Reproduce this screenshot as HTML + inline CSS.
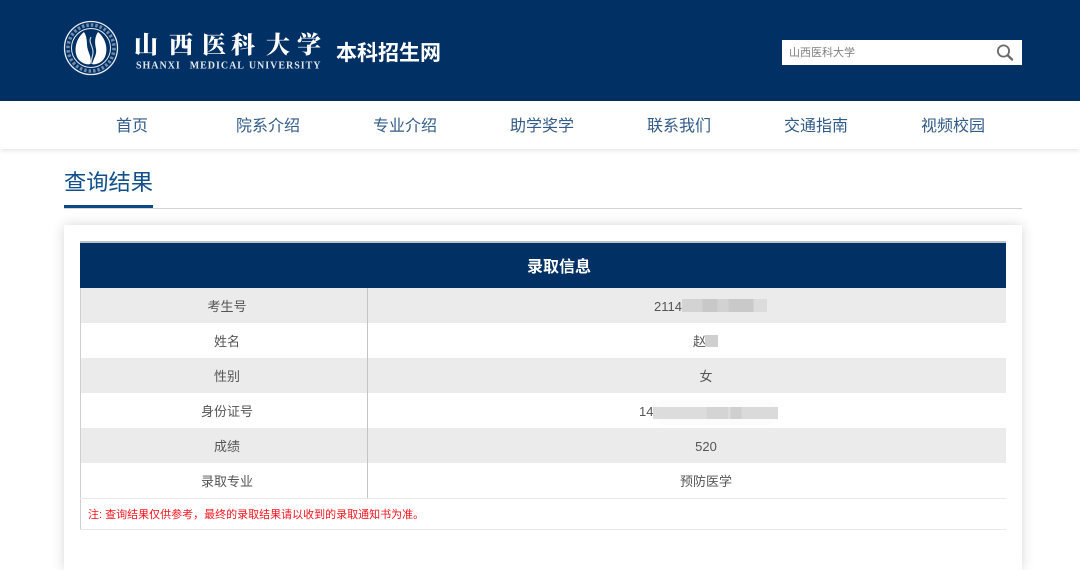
<!DOCTYPE html>
<html lang="zh"><head><meta charset="utf-8"><style>
html{margin:0;padding:0;background:#fff;height:570px;overflow:hidden}
body{margin:0;padding:0;background:#fff;width:1080px;height:570px;overflow:hidden;position:relative;font-family:"Liberation Sans","Noto Sans CJK SC",sans-serif}
.a{position:absolute;white-space:nowrap}
.hd{left:0;top:0;width:1080px;height:101px;background:#003064}
.nav{left:0;top:101px;width:1080px;height:48px;background:#fff;box-shadow:0 1px 5px rgba(0,0,0,.13)}
.n{top:116px;width:136px;text-align:center;font-size:16px;line-height:22px;color:#315b88}
.cn{top:28px;font-family:"Noto Serif CJK SC",serif;font-weight:900;font-size:24px;line-height:30px;color:#fff}
.card{left:64px;top:225px;width:958px;height:345px;background:#fff;box-shadow:0 0 12px rgba(0,0,0,.16)}
.row{left:80px;width:926px;height:35px}
.g{background:#ebebeb}
.l,.v{top:1px;text-align:center;font-size:13px;line-height:35px;color:#555;position:absolute}
.l{left:0;width:294px}
.v{left:288px;width:676px}
.t{font-size:13px;line-height:35px;color:#555}
</style></head><body>
<div class="a hd"></div>
<svg class="a" style="left:63px;top:20px" width="56" height="56" viewBox="0 0 56 56">
<circle cx="28" cy="28" r="26.500" fill="none" stroke="#e8edf3" stroke-width="1.300"/>
<circle cx="28" cy="28" r="19.500" fill="none" stroke="#e8edf3" stroke-width="1"/>
<circle cx="28" cy="28" r="23" fill="none" stroke="#6f8cab" stroke-width="3.500" stroke-dasharray="2.500 2"/>
<path d="M21 12C12 19 10 33 16 40C20 44 25 45 27 44C29 38 26 34 25 30C23 24 25 18 21 12Z" fill="#fff"/>
<path d="M35 12C44 19 46 33 40 40C36 44 31 45 29 44C31 38 34 34 33 29C32 24 31 18 35 12Z" fill="#fff"/>
<path d="M28 17C25 22 30 26 30 32C30 36 28 39 28 44" fill="none" stroke="#c6d2df" stroke-width="1.200"/>
</svg>
<div class="a cn" style="left:134px">山</div>
<div class="a cn" style="left:169px">西</div>
<div class="a cn" style="left:202px">医</div>
<div class="a cn" style="left:231px">科</div>
<div class="a cn" style="left:266px">大</div>
<div class="a cn" style="left:297px">学</div>
<div class="a" style="left:136px;top:59px;font-family:'Liberation Serif',serif;font-weight:700;font-size:10px;line-height:12px;letter-spacing:.98px;color:#dfe6ee;word-spacing:1px;transform:translateY(1.500px)">SHANXI&nbsp; MEDICAL UNIVERSITY</div>
<div class="a" style="left:336px;top:40px;font-weight:700;font-size:21px;line-height:28px;color:#fff">本科招生网</div>
<div class="a" style="left:782px;top:40px;width:240px;height:25px;background:#fff"></div>
<div class="a" style="left:789px;top:45px;font-size:11px;line-height:17px;color:#808080">山西医科大学</div>
<svg class="a" style="left:995px;top:43px" width="20" height="18" viewBox="0 0 20 18"><circle cx="8.500" cy="8" r="5.600" fill="none" stroke="#6b6b6b" stroke-width="1.800"/><path d="M12.700 12.300L17 16.500" stroke="#6b6b6b" stroke-width="2.400" stroke-linecap="round"/></svg>
<div class="a nav"></div>
<div class="a n" style="left:64px">首页</div>
<div class="a n" style="left:200px">院系介绍</div>
<div class="a n" style="left:337px">专业介绍</div>
<div class="a n" style="left:474px">助学奖学</div>
<div class="a n" style="left:611px">联系我们</div>
<div class="a n" style="left:748px">交通指南</div>
<div class="a n" style="left:885px">视频校园</div>
<div class="a" style="left:64px;top:166px;font-size:22.250px;line-height:33px;color:#11508c">查询结果</div>
<div class="a" style="left:64px;top:208px;width:958px;height:1px;background:#d3d3d3"></div>
<div class="a" style="left:64px;top:205px;width:89px;height:3px;background:#0b4a86"></div>
<div class="a card"></div>
<div class="a" style="left:80px;top:241px;width:926px;height:2px;background:#bcc1c7"></div>
<div class="a" style="left:80px;top:243px;width:926px;height:45px;background:#003064"></div>
<div class="a" style="left:527px;top:245px;color:#fff;font-weight:700;font-size:16px;line-height:46px">录取信息</div>
<div class="a row g" style="top:288px"><div class="l">考生号</div></div>
<div class="a row" style="top:323px"><div class="l">姓名</div></div>
<div class="a row g" style="top:358px"><div class="l">性别</div><div class="v">女</div></div>
<div class="a row" style="top:393px"><div class="l">身份证号</div></div>
<div class="a row g" style="top:428px"><div class="l">成绩</div><div class="v">520</div></div>
<div class="a row" style="top:463px"><div class="l">录取专业</div><div class="v">预防医学</div></div>
<div class="a t" style="left:654px;top:289px">2114</div>
<div class="a t" style="left:693px;top:324px">赵</div>
<div class="a t" style="left:639px;top:394px">14</div>
<div class="a" style="left:682px;top:299px;width:85px;height:13px;background:linear-gradient(90deg,#d3d3d3 0,#d3d3d3 24%,#c8c8c8 24%,#c8c8c8 42%,#d2d2d2 42%,#d2d2d2 55%,#c9c9c9 55%,#c9c9c9 84%,#dcdcdc 84%,#dcdcdc 100%)"></div>
<div class="a" style="left:705px;top:335px;width:13px;height:12px;background:#cfcfcf"></div>
<div class="a" style="left:653px;top:400px;width:126px;height:25px;background:#fcfcfc;border-radius:12px"></div>
<div class="a" style="left:653px;top:407px;width:125px;height:12px;background:linear-gradient(90deg,#dcdcdc 0,#dcdcdc 43%,#d4d4d4 43%,#d4d4d4 60%,#dddddd 60%,#dddddd 62%,#cfcfcf 62%,#cfcfcf 71%,#dadada 71%,#dadada 100%)"></div>
<div class="a" style="left:80px;top:288px;width:1px;height:242px;background:#cfcfcf"></div>
<div class="a" style="left:367px;top:288px;width:1px;height:211px;background:#c4c4c4"></div>
<div class="a" style="left:80px;top:498px;width:926px;height:1px;background:#e8e8e8"></div>
<div class="a" style="left:80px;top:529px;width:926px;height:1px;background:#e8e8e8"></div>
<div class="a" style="left:88px;top:507px;font-size:11px;line-height:16px;color:#f5141e">注: 查询结果仅供参考，最终的录取结果请以收到的录取通知书为准。</div>
</body></html>
